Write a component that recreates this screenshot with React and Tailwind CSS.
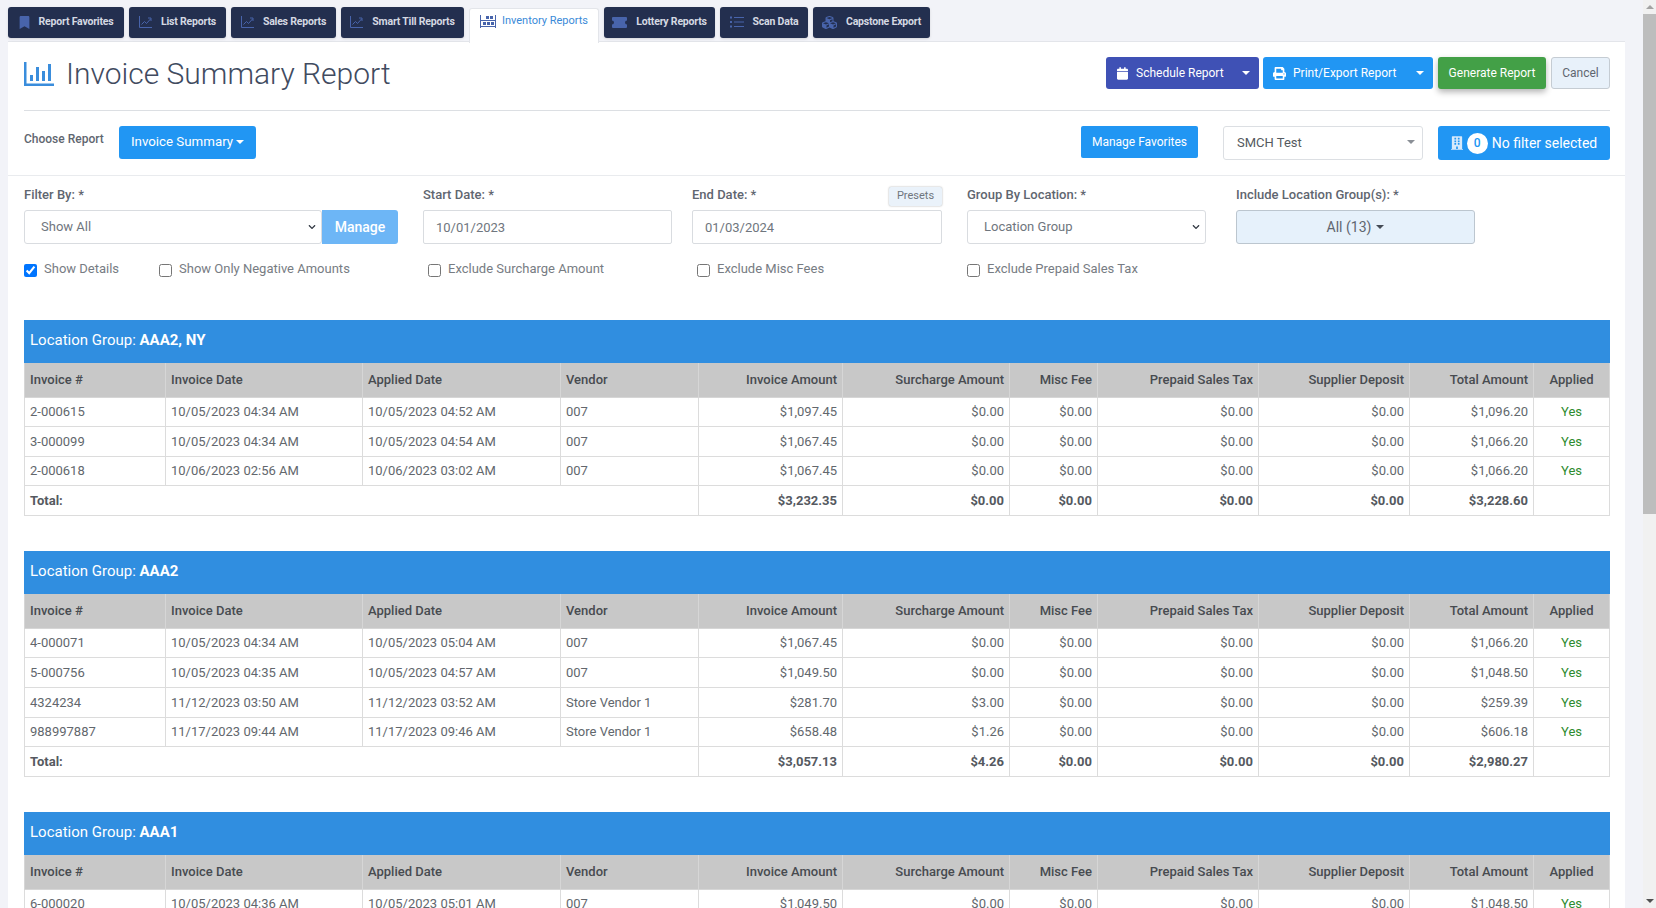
import { FaBookmark, FaCubes, FaCalendar, FaPrint, FaBuilding, FaChevronDown } from "react-icons/fa";

function ChartIcon() {
  return (
    <svg viewBox="0 0 13 12" className="w-[13px] h-[12px]" fill="none" stroke="currentColor" strokeWidth="1">
      <path d="M0.5 0v11.5H13" />
      <path d="M2.5 8.5l3-3 2 2 4-4.5" />
      <path d="M9 2h3v3" />
    </svg>
  );
}

const tabs = [
  { name: "Report Favorites", width: "w-[116px]", icon: <FaBookmark className="w-[11px] h-[13px]" /> },
  { name: "List Reports", width: "w-[97px]", icon: <ChartIcon /> },
  { name: "Sales Reports", width: "w-[105px]", icon: <ChartIcon /> },
  { name: "Smart Till Reports", width: "w-[123px]", icon: <ChartIcon /> },
];

const tabsAfter = [
  {
    name: "Lottery Reports",
    width: "w-[111px]",
    icon: (
      <svg viewBox="0 0 15 11" className="w-[15px] h-[11px]" fill="currentColor">
        <path d="M1 0h13a1 1 0 0 1 1 1v2.5a2 2 0 0 0 0 4V10a1 1 0 0 1-1 1H1a1 1 0 0 1-1-1V7.5a2 2 0 0 0 0-4V1a1 1 0 0 1 1-1z" />
      </svg>
    ),
  },
  {
    name: "Scan Data",
    width: "w-[88px]",
    icon: (
      <svg viewBox="0 0 14 12" className="w-[14px] h-[12px]" fill="currentColor">
        <rect x="0" y="0.5" width="2" height="2" />
        <rect x="0" y="5" width="2" height="2" />
        <rect x="0" y="9.5" width="2" height="2" />
        <rect x="4" y="1" width="10" height="1" />
        <rect x="4" y="5.5" width="10" height="1" />
        <rect x="4" y="10" width="10" height="1" />
      </svg>
    ),
  },
  { name: "Capstone Export", width: "w-[117px]", icon: <FaCubes className="w-[15px] h-[15px]" /> },
];

const columns = [
  { label: "Invoice #", width: "w-[141px]", align: "text-left" },
  { label: "Invoice Date", width: "w-[197px]", align: "text-left" },
  { label: "Applied Date", width: "w-[198px]", align: "text-left" },
  { label: "Vendor", width: "w-[138px]", align: "text-left" },
  { label: "Invoice Amount", width: "w-[144px]", align: "text-right" },
  { label: "Surcharge Amount", width: "w-[167px]", align: "text-right" },
  { label: "Misc Fee", width: "w-[88px]", align: "text-right" },
  { label: "Prepaid Sales Tax", width: "w-[161px]", align: "text-right" },
  { label: "Supplier Deposit", width: "w-[151px]", align: "text-right" },
  { label: "Total Amount", width: "w-[124px]", align: "text-right" },
  { label: "Applied", width: "w-[76px]", align: "text-center" },
];

const groups = [
  {
    name: "AAA2, NY",
    rows: [
      ["2-000615", "10/05/2023 04:34 AM", "10/05/2023 04:52 AM", "007", "$1,097.45", "$0.00", "$0.00", "$0.00", "$0.00", "$1,096.20"],
      ["3-000099", "10/05/2023 04:34 AM", "10/05/2023 04:54 AM", "007", "$1,067.45", "$0.00", "$0.00", "$0.00", "$0.00", "$1,066.20"],
      ["2-000618", "10/06/2023 02:56 AM", "10/06/2023 03:02 AM", "007", "$1,067.45", "$0.00", "$0.00", "$0.00", "$0.00", "$1,066.20"],
    ],
    total: ["$3,232.35", "$0.00", "$0.00", "$0.00", "$0.00", "$3,228.60"],
  },
  {
    name: "AAA2",
    rows: [
      ["4-000071", "10/05/2023 04:34 AM", "10/05/2023 05:04 AM", "007", "$1,067.45", "$0.00", "$0.00", "$0.00", "$0.00", "$1,066.20"],
      ["5-000756", "10/05/2023 04:35 AM", "10/05/2023 04:57 AM", "007", "$1,049.50", "$0.00", "$0.00", "$0.00", "$0.00", "$1,048.50"],
      ["4324234", "11/12/2023 03:50 AM", "11/12/2023 03:52 AM", "Store Vendor 1", "$281.70", "$3.00", "$0.00", "$0.00", "$0.00", "$259.39"],
      ["988997887", "11/17/2023 09:44 AM", "11/17/2023 09:46 AM", "Store Vendor 1", "$658.48", "$1.26", "$0.00", "$0.00", "$0.00", "$606.18"],
    ],
    total: ["$3,057.13", "$4.26", "$0.00", "$0.00", "$0.00", "$2,980.27"],
  },
  {
    name: "AAA1",
    rows: [
      ["6-000020", "10/05/2023 04:36 AM", "10/05/2023 05:01 AM", "007", "$1,049.50", "$0.00", "$0.00", "$0.00", "$0.00", "$1,048.50"],
    ],
  },
];

const checks = [
  { label: "Show Details", checked: true, width: "w-[135px]" },
  { label: "Show Only Negative Amounts", width: "w-[269px]" },
  { label: "Exclude Surcharge Amount", width: "w-[269px]" },
  { label: "Exclude Misc Fees", width: "w-[270px]" },
  { label: "Exclude Prepaid Sales Tax", width: "w-[200px]" },
];

function Caret({ color = "border-t-white" }) {
  return <span className={`inline-block w-0 h-0 border-x-[4px] border-x-transparent border-t-[4px] ${color}`} />;
}

function Tab({ tab }) {
  return (
    <div className={`${tab.width} h-[31px] pb-px flex items-center justify-center gap-[9px] bg-[#232f4f] rounded-[3px] shadow-sm text-[10.5px] tracking-[-0.2px] font-bold text-[#d5d9e2]`}>
      <span className="text-[#4864ab]">{tab.icon}</span>
      {tab.name}
    </div>
  );
}

function Label({ children }) {
  return <label className="block text-[13px] leading-[16px] font-medium text-[#5f6670]">{children}</label>;
}

function SelectBox({ value, className = "" }) {
  return (
    <div className={`relative h-[34px] ${className}`}>
      <select
        defaultValue={value}
        className="w-full h-full appearance-none bg-white border border-[#d9dce0] rounded-[3px] pl-[16px] text-[13px] text-[#6f767e] outline-none"
      >
        <option>{value}</option>
      </select>
      <FaChevronDown className="absolute right-[5px] top-[13px] w-[10px] h-[8px] text-[#333a44]" />
    </div>
  );
}

function ReportTable({ group }) {
  return (
    <table className="w-[1585px] table-fixed border-collapse text-[13px] mb-[35.5px]">
      <colgroup>
        {columns.map((c) => (
          <col key={c.label} className={c.width} />
        ))}
      </colgroup>
      <thead>
        <tr className="h-[41.5px] bg-[#308ee0] text-white">
          <th colSpan={11} className="px-[5px] pb-[2px] text-left text-[15px] font-normal border border-[#308ee0]">
            Location Group: <span className="font-bold">{group.name}</span>
          </th>
        </tr>
        <tr className="h-[35px] bg-[#c8c8c8] text-[#474b50]">
          {columns.map((c) => (
            <th key={c.label} className={`px-[5px] font-medium border border-[#d6d6d6] ${c.align}`}>
              {c.label}
            </th>
          ))}
        </tr>
      </thead>
      <tbody className="text-[#62676d]">
        {group.rows.map((row) => (
          <tr key={row[0]} className="h-[29.6px]">
            {row.map((cell, i) => (
              <td key={i} className={`px-[5px] border border-[#dcdcdc] ${columns[i].align}`}>
                {cell}
              </td>
            ))}
            <td className="px-[5px] border border-[#dcdcdc] text-center text-[#2e8b2e]">Yes</td>
          </tr>
        ))}
        {group.total && (
          <tr className="h-[29.6px] font-bold text-[#55595f]">
            <td colSpan={4} className="px-[5px] border border-[#dcdcdc]">Total:</td>
            {group.total.map((cell, i) => (
              <td key={i} className="px-[5px] border border-[#dcdcdc] text-right">{cell}</td>
            ))}
            <td className="border border-[#dcdcdc]"></td>
          </tr>
        )}
      </tbody>
    </table>
  );
}

export default function App() {
  return (
    <div className="h-[908px] flex overflow-hidden bg-[#f2f3f8] font-['Roboto',sans-serif]">
      <div className="w-[1643px] shrink-0 pl-2 pr-[18px] pt-[7px]">
        {/* tabs */}
        <div className="flex items-start gap-[5px] h-[34px]">
          {tabs.map((t) => (
            <Tab key={t.name} tab={t} />
          ))}
          <div className="relative z-10 w-[130px] h-[35px] mt-px flex items-start pt-[4px] justify-center gap-[6px] bg-white border border-b-0 border-[#e3e5ea] rounded-t-[3px] text-[11px] leading-[16px] text-[#3a8ad8]">
            <svg viewBox="0 0 16 13" className="mt-[2px] w-[16px] h-[13px] text-[#4864ab]" fill="currentColor">
              <path d="M0 0h1v13H0zM15 0h1v13h-1zM1 5h14v1H1zM1 11h14v1H1z" />
              <rect x="3" y="7" width="3" height="3" />
              <rect x="7" y="7" width="3" height="3" />
              <rect x="11" y="7" width="3" height="3" />
              <rect x="6" y="1" width="3" height="3" />
              <rect x="10" y="1" width="3" height="3" />
            </svg>
            Inventory Reports
          </div>
          {tabsAfter.map((t) => (
            <Tab key={t.name} tab={t} />
          ))}
        </div>

        {/* panel */}
        <div className="h-[900px] bg-white border-t border-[#e3e5ea] pt-[15px]">
          <div className="mx-4 mr-[15px] flex items-start justify-between h-[32px]">
            <div className="flex items-center h-[32px] mt-px">
              <svg viewBox="0 0 30 24" className="w-[30px] h-[24px] text-[#3a8ddc]" fill="currentColor">
                <path d="M0 0h2.5v21.5H30V24H0z" />
                <rect x="6" y="13" width="3" height="6" />
                <rect x="12" y="5" width="3" height="14" />
                <rect x="18" y="9" width="3" height="10" />
                <rect x="24" y="2" width="3" height="17" />
              </svg>
              <h1 className="ml-[12px] text-[30px] font-light text-[#414b5f] leading-none">Invoice Summary Report</h1>
            </div>
            <div className="flex items-center">
              <div className="w-[153px] h-[32px] flex items-center bg-[#3f51b5] rounded-[3px] text-white text-[12px] pl-[11px]">
                <FaCalendar className="w-[11px] h-[13px]" />
                <span className="ml-[8px]">Schedule Report</span>
                <span className="ml-auto mr-[9px] flex"><Caret /></span>
              </div>
              <div className="ml-1 w-[170px] h-[32px] flex items-center bg-[#2196f3] rounded-[3px] text-white text-[12px] pl-[10px]">
                <FaPrint className="w-[13px] h-[13px]" />
                <span className="ml-[7px]">Print/Export Report</span>
                <span className="ml-auto mr-[9px] flex"><Caret /></span>
              </div>
              <div className="ml-[5px] w-[108px] h-[32px] flex items-center justify-center bg-[#43a047] rounded-[3px] text-white text-[12px] shadow-[0_3px_6px_rgba(0,0,0,0.3)]">
                Generate Report
              </div>
              <div className="ml-[5px] w-[59px] h-[32px] flex items-center justify-center bg-[#e8f1fa] border border-[#c5ccd3] rounded-[3px] text-[#5f6670] text-[12px]">
                Cancel
              </div>
            </div>
          </div>

          <div className="mx-4 mr-[15px] mt-[21px] border-t border-[#dcdfe3]"></div>

          <div className="mx-4 mr-[15px] mt-[15px] flex items-start h-[34px]">
            <span className="mt-[5px] w-[95px] text-[12px] leading-[16px] font-medium text-[#5f6670]">Choose Report</span>
            <div className="w-[137px] h-[33px] pb-px flex items-center justify-center gap-[3px] bg-[#2196f3] rounded-[3px] text-white text-[13.3px]">
              Invoice Summary <Caret />
            </div>
            <div className="ml-auto w-[117px] h-[32px] flex items-center justify-center bg-[#2196f3] rounded-[2px] text-white text-[12px]">
              Manage Favorites
            </div>
            <div className="relative ml-[25px] w-[200px] h-[34px] flex items-center border border-[#dcdfe3] rounded-[3px] pl-[13px] text-[13px] text-[#555a60]">
              SMCH Test
              <span className="absolute right-[7px] top-[13px] flex"><Caret color="border-t-[#8a8f96]" /></span>
            </div>
            <div className="ml-[15px] w-[172px] h-[34px] flex items-center justify-center bg-[#2196f3] rounded-[3px] text-white text-[14px]">
              <FaBuilding className="w-[12px] h-[16px] text-[#d6e9fb]" />
              <span className="mx-[4px] w-[21px] h-[21px] rounded-full bg-white text-[#2196f3] text-[12px] font-medium flex items-center justify-center">0</span>
              No filter selected
            </div>
          </div>

          <div className="mt-[15px] border-t border-[#e9ebee]"></div>

          {/* filters */}
          <div className="mx-4 mr-[15px] mt-[11px] flex items-start">
            <div className="w-[399px]">
              <Label>Filter By: *</Label>
              <div className="mt-[7px] flex">
                <SelectBox value="Show All" className="w-[298px]" />
                <div className="w-[76px] h-[34px] flex items-center justify-center bg-[#6db6f6] rounded-r-[3px] text-white text-[14px] font-medium">
                  Manage
                </div>
              </div>
            </div>
            <div className="w-[269px]">
              <Label>Start Date: *</Label>
              <input readOnly value="10/01/2023" className="mt-[7px] w-[249px] h-[34px] border border-[#d9dce0] rounded-[2px] px-[12px] text-[13px] text-[#6f767e] outline-none" />
            </div>
            <div className="w-[275px]">
              <div className="relative w-[250px]">
                <Label>End Date: *</Label>
                <span className="absolute right-0 top-0 w-[53px] h-[19px] flex items-center justify-center bg-[#eaf2fa] rounded-[2px] shadow-[0_0_2px_rgba(0,0,0,0.35)] text-[11px] text-[#6f767e]">Presets</span>
              </div>
              <input readOnly value="01/03/2024" className="mt-[7px] w-[250px] h-[34px] border border-[#d9dce0] rounded-[2px] px-[12px] text-[13px] text-[#6f767e] outline-none" />
            </div>
            <div className="w-[269px]">
              <Label>Group By Location: *</Label>
              <SelectBox value="Location Group" className="mt-[7px] w-[239px]" />
            </div>
            <div>
              <Label>Include Location Group(s): *</Label>
              <div className="mt-[7px] w-[239px] h-[34px] flex items-center justify-center gap-[5px] bg-[#e6f1fb] border border-[#bcc6cf] rounded-[3px] text-[14px] text-[#5f6670]">
                All (13) <Caret color="border-t-[#444b55]" />
              </div>
            </div>
          </div>

          <div className="mx-4 mr-[15px] mt-[17px] flex items-start">
            {checks.map((c) => (
              <label key={c.label} className={`${c.width} flex items-start text-[13px] leading-[16px] text-[#777c83]`}>
                <input type="checkbox" readOnly checked={!!c.checked} className="mt-[3px] mr-[7px] w-[13px] h-[13px] accent-[#0075ff]" />
                {c.label}
              </label>
            ))}
          </div>

          <div className="mx-4 mt-[43px]">
            {groups.map((g) => (
              <ReportTable key={g.name} group={g} />
            ))}
          </div>
        </div>
      </div>

      {/* scrollbar */}
      <div className="w-[13px] shrink-0 flex flex-col bg-[#f1f1f1]">
        <div className="h-[14px] flex items-center justify-center">
          <span className="w-0 h-0 border-x-[4px] border-x-transparent border-b-[4px] border-b-[#a3a3a3]" />
        </div>
        <div className="h-[500px] bg-[#bdbdbd]"></div>
        <div className="mt-auto h-[14px] flex items-center justify-center">
          <Caret color="border-t-[#505050]" />
        </div>
      </div>
    </div>
  );
}
